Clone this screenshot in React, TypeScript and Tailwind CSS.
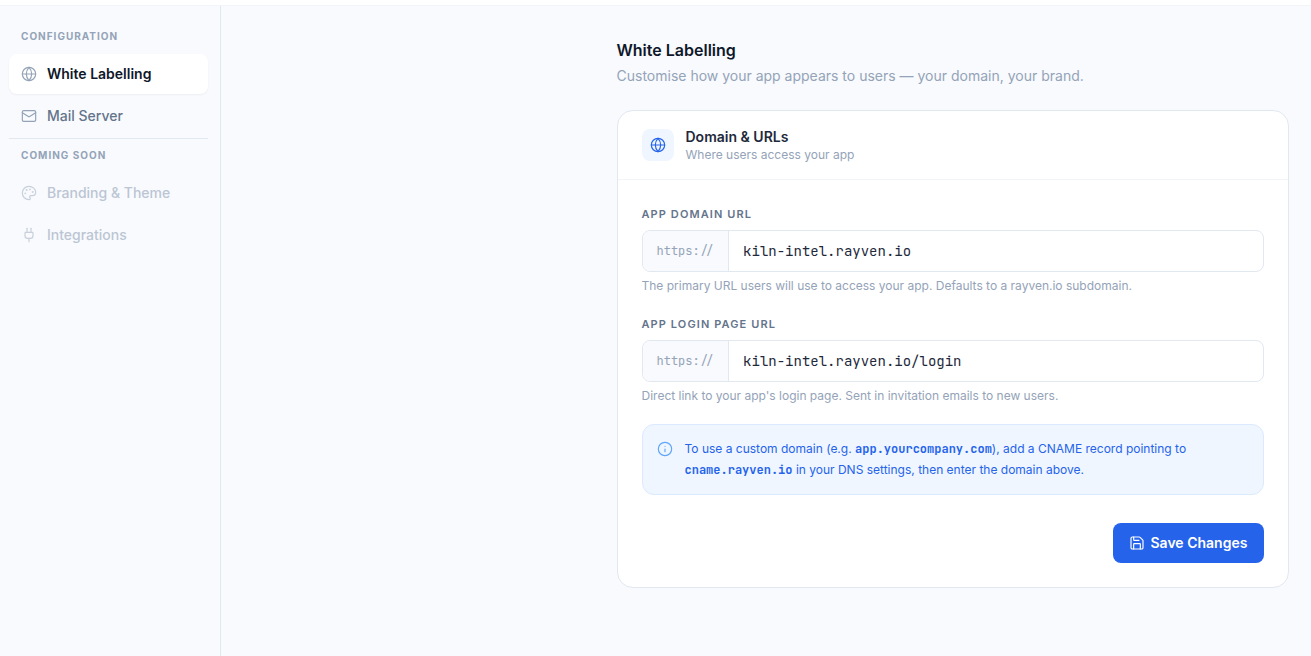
import React from "react";
import { Globe, Info, Mail, Palette, Plug, Save } from "lucide-react";
import type { LucideIcon } from "lucide-react";

const mono = "font-['JetBrains_Mono','DejaVu_Sans_Mono',monospace]";

function SectionLabel({ children }: { children: React.ReactNode }) {
  return (
    <div className="px-3 text-[10px] leading-[15px] font-bold tracking-[1px] text-[#94a3b8] uppercase">
      {children}
    </div>
  );
}

type NavItemProps = { icon: LucideIcon; label: string; className: string; iconClassName?: string };

function NavItem({ icon: Icon, label, className, iconClassName = "text-[#94a3b8]" }: NavItemProps) {
  return (
    <div className={`flex h-10 items-center gap-2.5 rounded-lg px-3 text-sm ${className}`}>
      <Icon size={16} strokeWidth={1.75} className={`shrink-0 ${iconClassName}`} />
      <span>{label}</span>
    </div>
  );
}

function UrlField({ label, value, hint }: { label: string; value: string; hint: string }) {
  return (
    <div>
      <div className="text-[11px] leading-4 font-semibold tracking-[1.1px] text-[#64748b] uppercase">{label}</div>
      <div className="mt-2 flex h-[42px] overflow-hidden rounded-lg border border-[#e2e8f0] bg-white">
        <div className={`flex w-[86px] shrink-0 items-center border-r border-[#e2e8f0] bg-[#f8fafd] pl-3.5 text-xs text-[#94a3b8] ${mono}`}>
          https://
        </div>
        <div className={`flex items-center px-[14.6px] text-sm text-[#1e293b] ${mono}`}>{value}</div>
      </div>
      <p className="mt-1.5 text-xs leading-4 text-[#94a3b8]">{hint}</p>
    </div>
  );
}

export default function App() {
  return (
    <div className="flex h-screen flex-col overflow-hidden bg-[#f8fafd] font-['Inter',sans-serif]">
      <div className="h-1.5 shrink-0 border-b border-[#f1f5f9] bg-white" />
      <div className="flex min-h-0 flex-1">
        <aside className="w-[221px] shrink-0 border-r border-[#e2e8f0] pt-[23px] pr-3 pl-[9px]">
          <SectionLabel>Configuration</SectionLabel>
          <nav className="mt-2.5 flex flex-col gap-0.5">
            <NavItem icon={Globe} label="White Labelling" className="bg-white font-semibold text-[#0f172a] shadow-xs" />
            <NavItem icon={Mail} label="Mail Server" className="font-medium text-[#64748b]" />
          </nav>
          <div className="mt-0.5 mb-[9px] border-t border-[#e2e8f0]" />
          <SectionLabel>Coming Soon</SectionLabel>
          <nav className="mt-2.5 flex flex-col gap-0.5">
            <NavItem
              icon={Palette}
              label="Branding & Theme"
              className="font-medium text-[#94a3b8] opacity-60"
              iconClassName="text-[#a9b5c6]"
            />
            <NavItem
              icon={Plug}
              label="Integrations"
              className="font-medium text-[#94a3b8] opacity-60"
              iconClassName="text-[#a9b5c6]"
            />
          </nav>
        </aside>

        <main className="flex flex-1 justify-end pt-8 pr-[22.5px]">
          <div className="w-[672px]">
            <h1 className="text-base leading-6 font-semibold text-[#0f172a]">White Labelling</h1>
            <p className="mt-1 text-sm leading-5 text-[#94a3b8]">
              Customise how your app appears to users — your domain, your brand.
            </p>

            <section className="mt-6 h-[478px] rounded-2xl border border-[#e2e8f0] bg-white">
              <header className="flex h-[69px] items-center gap-3 border-b border-[#f1f5f9] px-6">
                <div className="flex size-8 items-center justify-center rounded-lg bg-[#eff6ff]">
                  <Globe size={16} strokeWidth={1.75} className="text-[#2563eb]" />
                </div>
                <div>
                  <h2 className="text-sm leading-5 font-semibold text-[#1e293b]">Domain &amp; URLs</h2>
                  <p className="text-xs leading-4 text-[#94a3b8]">Where users access your app</p>
                </div>
              </header>

              <div className="flex flex-col px-6 pt-[26px]">
                <div className="flex flex-col gap-[22px]">
                  <UrlField
                    label="App Domain URL"
                    value="kiln-intel.rayven.io"
                    hint="The primary URL users will use to access your app. Defaults to a rayven.io subdomain."
                  />
                  <UrlField
                    label="App Login Page URL"
                    value="kiln-intel.rayven.io/login"
                    hint="Direct link to your app's login page. Sent in invitation emails to new users."
                  />
                </div>

                <div className="mt-5 flex h-[71px] gap-3 rounded-xl border border-[#dbeafe] bg-[#eff6ff] px-3.5 pt-[13px]">
                  <Info size={16} strokeWidth={1.75} className="mt-[3px] shrink-0 text-[#60a5fa]" />
                  <p className="w-[510px] text-xs leading-[21px] text-[#2563eb]">
                    To use a custom domain (e.g. <b className={`leading-none font-semibold ${mono}`}>app.yourcompany.com</b>),
                    add a CNAME record pointing to <b className={`leading-none font-semibold ${mono}`}>cname.rayven.io</b> in
                    your DNS settings, then enter the domain above.
                  </p>
                </div>

                <button className="mt-7 flex h-10 w-[151px] items-center gap-1.5 self-end rounded-lg bg-[#2563eb] pl-4 text-sm font-semibold text-white">
                  <Save size={16} strokeWidth={1.75} />
                  Save Changes
                </button>
              </div>
            </section>
          </div>
        </main>
      </div>
    </div>
  );
}
